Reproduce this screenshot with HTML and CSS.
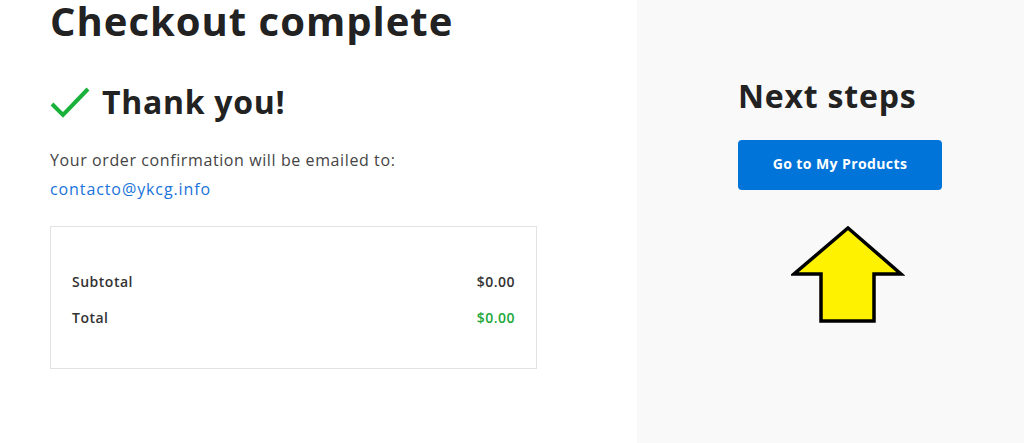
FILE: index.html
```html
<!DOCTYPE html>
<html lang="en">
<head>
    <meta charset="UTF-8">
    <meta name="viewport" content="width=device-width, initial-scale=1.0">
    <title>Checkout complete</title>
    <link rel="stylesheet" href="styles.css">
</head>
<body>

<div class="page">
    <div class="main">
        <h1 class="title">Checkout complete</h1>

        <div class="thanks">
            <svg class="check" width="40" height="32" viewBox="0 0 40 32">
                <path d="M2 18 L13 29 L38 3" fill="none" stroke="#19b13a" stroke-width="4"/>
            </svg>
            <h2>Thank you!</h2>
        </div>

        <p class="note">Your order confirmation will be emailed to:</p>
        <a class="email" href="#">contacto@ykcg.info</a>

        <div class="summary">
            <div class="row">
                <span>Subtotal</span>
                <span>$0.00</span>
            </div>
            <div class="row">
                <span>Total</span>
                <span class="green">$0.00</span>
            </div>
        </div>
    </div>

    <div class="side">
        <h2>Next steps</h2>
        <button class="btn">Go to My Products</button>
        <svg class="arrow" width="114" height="100" viewBox="0 0 114 100">
            <path d="M57 2 L110 48 L83 48 L83 95 L30 95 L30 48 L3 48 Z" fill="#fff200" stroke="#000" stroke-width="3.5" stroke-linejoin="miter"/>
        </svg>
    </div>
</div>

</body>
</html>
```

FILE: styles.css
```css
* {
    margin: 0;
    padding: 0;
    box-sizing: border-box;
}

body {
    font-family: 'Open Sans', sans-serif;
    color: #222;
    background-color: #fff;
    height: 443px;
    overflow: hidden;
}

.page {
    display: flex;
    height: 443px;
}

.main {
    width: 637px;
    padding: 0 100px 0 50px;
}

.title {
    font-size: 40px;
    font-weight: 700;
    line-height: 40px;
    letter-spacing: 1px;
    margin-top: 1px;
}

.thanks {
    display: flex;
    align-items: center;
    gap: 12px;
    margin-top: 41px;
}

.thanks h2 {
    font-size: 32px;
    font-weight: 700;
    line-height: 40px;
    letter-spacing: 0.7px;
}

.note {
    margin-top: 28px;
    font-size: 16px;
    color: #444;
    line-height: 20px;
    letter-spacing: 0.6px;
}

.email {
    display: block;
    margin-top: 9px;
    font-size: 16px;
    color: #1a73d9;
    text-decoration: none;
    line-height: 20px;
    letter-spacing: 0.9px;
}

.summary {
    margin-top: 27px;
    width: 487px;
    border: 1px solid #e2e2e2;
    padding: 46px 21px 41px;
    display: flex;
    flex-direction: column;
    gap: 18px;
}

.row {
    display: flex;
    justify-content: space-between;
    font-size: 14px;
    font-weight: 600;
    color: #333;
    line-height: 18px;
    letter-spacing: 0.5px;
}

.green {
    color: #20a83a;
}

.side {
    flex: 1;
    background-color: #f9f9f9;
    padding: 76px 0 0 101px;
}

.side h2 {
    font-size: 32px;
    font-weight: 700;
    line-height: 40px;
    letter-spacing: 0.8px;
}

.btn {
    display: block;
    margin-top: 24px;
    width: 204px;
    height: 50px;
    padding-bottom: 4px;
    background-color: #0074d9;
    color: #fff;
    border: none;
    border-radius: 4px;
    font-family: inherit;
    font-size: 14px;
    font-weight: 700;
    letter-spacing: 0.4px;
    cursor: pointer;
}

.arrow {
    display: block;
    margin: 36px 0 0 53px;
}
```
